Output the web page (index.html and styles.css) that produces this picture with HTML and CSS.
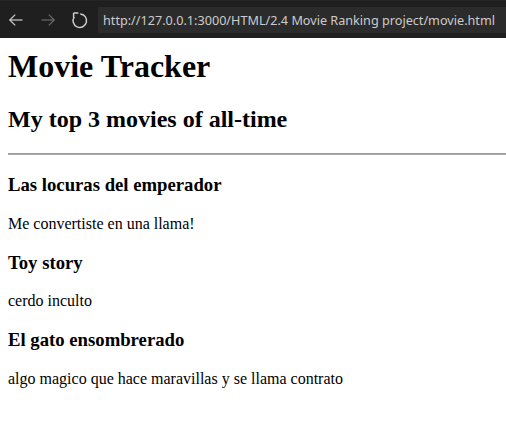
FILE: index.html
```html
<!DOCTYPE html>
<html lang="es">
<head>
<meta charset="utf-8">
<title>Movie Tracker</title>
<link rel="stylesheet" href="styles.css">
</head>
<body>
<div class="toolbar">
  <span class="nav-btn">
    <svg width="16" height="16" viewBox="0 0 16 16" fill="none" stroke="#cccccc" stroke-width="1.2">
      <path d="M1.8 8 H14.5"/>
      <path d="M7.2 2.6 L1.8 8 L7.2 13.4"/>
    </svg>
  </span>
  <span class="nav-btn dim">
    <svg width="16" height="16" viewBox="0 0 16 16" fill="none" stroke="#6b6b6b" stroke-width="1.2">
      <path d="M1.5 8 H14.2"/>
      <path d="M8.8 2.6 L14.2 8 L8.8 13.4"/>
    </svg>
  </span>
  <span class="nav-btn">
    <svg width="18" height="18" viewBox="0 0 16 16" fill="none" stroke="#cccccc" stroke-width="1.3">
      <path d="M2.9 5.2 A6 6 0 1 0 8.2 2.6"/>
      <path d="M2.3 1.8 H6.6 M2.3 1.8 V6.1"/>
    </svg>
  </span>
  <div class="url">http://127.0.0.1:3000/HTML/2.4 Movie Ranking project/movie.html</div>
</div>
<main class="page">
  <h1 class="title">Movie Tracker</h1>
  <h2>My top 3 movies of all-time</h2>
  <hr class="rule">
  <h3>Las locuras del emperador</h3>
  <p>Me convertiste en una llama!</p>
  <h3>Toy story</h3>
  <p>cerdo inculto</p>
  <h3>El gato ensombrerado</h3>
  <p>algo magico que hace maravillas y se llama contrato</p>
</main>
</body>
</html>
```

FILE: styles.css
```css
html, body {
  margin: 0;
  padding: 0;
  background: #ffffff;
}

body {
  font-family: "Liberation Serif", "Times New Roman", serif;
  color: #000000;
  overflow: hidden;
}

.toolbar {
  height: 38px;
  background: #1f1f1f;
  display: flex;
  align-items: center;
  box-sizing: border-box;
  border-top: 1px solid #262626;
}

.nav-btn {
  width: 32px;
  height: 26px;
  display: flex;
  align-items: center;
  justify-content: center;
  flex: none;
}

.url {
  margin-left: 2px;
  flex: 1;
  height: 26px;
  background: #2b2b2b;
  color: #cccccc;
  font-family: "Noto Sans", "Open Sans", sans-serif;
  font-size: 12.65px;
  line-height: 26px;
  padding-left: 5px;
  white-space: nowrap;
  overflow: hidden;
}

.page {
  padding: 0 0 0 8px;
}

.title {
  margin-top: 10px;
}

.rule {
  margin-right: 0;
  border: 0;
  border-top: 1px solid #9c9c9c;
  border-bottom: 1px solid #a8a8a8;
}
```
